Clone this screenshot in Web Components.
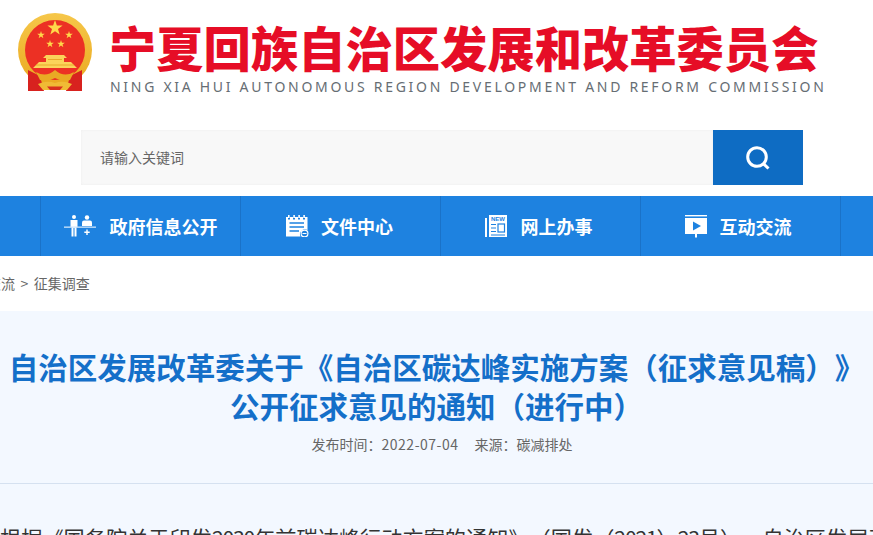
<!DOCTYPE html>
<html lang="zh-CN">
<head>
<meta charset="utf-8">
<title>征集调查</title>
<style>
  html, body { margin: 0; padding: 0; background: #fff; overflow: hidden; }
  body {
    width: 873px;
    height: 535px;
    font-family: "Noto Sans CJK SC", "Liberation Sans", sans-serif;
    color: #333;
    text-spacing-trim: space-all;
  }
</style>
</head>
<body>
<gov-header></gov-header>
<search-bar></search-bar>
<main-nav>
  <nav-item label="政府信息公开" icon="people"></nav-item>
  <nav-item label="文件中心" icon="file"></nav-item>
  <nav-item label="网上办事" icon="news"></nav-item>
  <nav-item label="互动交流" icon="screen"></nav-item>
</main-nav>
<bread-crumb></bread-crumb>
<article-panel
  heading="自治区发展改革委关于《自治区碳达峰实施方案（征求意见稿）》|公开征求意见的通知（进行中）"
  date="2022-07-04"
  source="碳减排处">根据《国务院关于印发<span class="n">2030</span>年前碳达峰行动方案的通知》（国发（<span class="n">2021</span>）<span class="n">23</span>号），自治区发展改</article-panel>

<script>
class GovHeader extends HTMLElement {
  constructor () {
    super()
    this.shadow = this.attachShadow({ mode: 'open' })
  }

  connectedCallback () {
    const star = (x, y, r) => {
      let pts = []
      for (let i = 0; i < 10; i++) {
        const a = -Math.PI / 2 + i * Math.PI / 5
        const rr = i % 2 ? r * 0.4 : r
        pts.push((x + rr * Math.cos(a)).toFixed(1) + ',' + (y + rr * Math.sin(a)).toFixed(1))
      }
      return `<polygon points="${pts.join(' ')}" fill="#ffd84a"/>`
    }
    this.shadow.innerHTML = `
      <style>
        :host { display: flex; height: 130px; padding-left: 17px; box-sizing: border-box; }
        svg { width: 76px; height: 82px; margin-top: 11px; flex: none; }
        .names { margin-left: 16px; padding-top: 17px; }
        .cn {
          font-size: 47.3px;
          line-height: 60px;
          font-weight: 900;
          color: #e60d26;
          white-space: nowrap;
        }
        .en {
          margin: 1px 0 0 1px;
          font-family: "Noto Sans", "Liberation Sans", sans-serif;
          font-size: 14px;
          line-height: 18px;
          letter-spacing: 2.71px;
          color: #666d73;
          white-space: nowrap;
        }
      </style>
      <svg viewBox="17 11 76 82">
        <defs>
          <linearGradient id="gold" x1="0" y1="0" x2="0" y2="1">
            <stop offset="0" stop-color="#f6c74a"/>
            <stop offset="1" stop-color="#eaa91f"/>
          </linearGradient>
        </defs>
        <circle cx="55" cy="50" r="37" fill="url(#gold)"/>
        <circle cx="55" cy="50" r="30" fill="#ec3024"/>
        ${star(55, 28, 8)}
        ${star(41, 35, 4)}
        ${star(69, 35, 4)}
        ${star(50, 44, 4)}
        ${star(61, 44, 4)}
        <path d="M43 58 L46 55 H64 L67 58 H64 V62 H71 L77 68 H33 L39 62 H46 V58 Z" fill="#fbd35a"/>
        <path d="M36 65 H74 M48 59.5 H62" stroke="#e5a11f" stroke-width=".8"/>
        <path d="M28 70 L40 76 L44 91 L28 91 Z M82 70 L70 76 L66 91 L82 91 Z" fill="#d8221f"/>
        <path d="M36 72 Q46 78 55 70 Q64 78 74 72 L70 80 Q62 82 55 78 Q48 82 40 80 Z" fill="#e9aa24"/>
        <path d="M38 84 Q47 80 55 83 Q63 80 72 84 L67 90 H43 Z" fill="#f0bb35"/>
        <path d="M47 86.5 H63 L60 90 H50 Z" fill="#d8301f"/>
      </svg>
      <div class="names">
        <div class="cn">宁夏回族自治区发展和改革委员会</div>
        <div class="en">NING XIA HUI AUTONOMOUS REGION DEVELOPMENT AND REFORM COMMISSION</div>
      </div>
    `
  }
}

class SearchBar extends HTMLElement {
  constructor () {
    super()
    this.shadow = this.attachShadow({ mode: 'open' })
  }

  connectedCallback () {
    this.shadow.innerHTML = `
      <style>
        :host { display: flex; height: 55px; margin: 0 70px 11px 81px; }
        .input {
          flex: 1;
          display: flex;
          align-items: center;
          padding: 0 0 2px 19px;
          background: #f8f8f8;
          box-shadow: inset 0 0 3px #eee;
          font-size: 14px;
          color: #666;
        }
        .btn {
          width: 90px;
          display: flex;
          align-items: center;
          justify-content: center;
          background: #0e6cc3;
        }
        svg { width: 26px; height: 26px; }
      </style>
      <div class="input">请输入关键词</div>
      <div class="btn">
        <svg viewBox="0 0 26 26" fill="none" stroke="#fff">
          <circle cx="12" cy="12" r="9.3" stroke-width="3"/>
          <path d="M18.6 18.8 L23.5 23.5" stroke-width="3"/>
        </svg>
      </div>
    `
  }
}

class MainNav extends HTMLElement {
  constructor () {
    super()
    this.shadow = this.attachShadow({ mode: 'open' })
    this.shadow.innerHTML = `
      <style>
        :host {
          display: flex;
          height: 60px;
          padding-left: 40px;
          background: #1e82e0;
          overflow: hidden;
        }
        .end { width: 0; border-left: 1px solid #1a72c8; }
      </style>
      <slot></slot>
      <div class="end"></div>
    `
  }
}

const NAV_ICONS = {
  people: `
    <svg viewBox="0 0 32 22" width="32" height="22" fill="#fff" style="margin:0 1px 0 3px">
      <circle cx="10" cy="2" r="2"/>
      <path d="M6.5 5 H13.5 V12 H12.5 V21.5 H10.5 V13 H9.5 V21.5 H7.5 V12 H6.5 Z"/>
      <circle cx="23" cy="2.5" r="2.2"/>
      <path d="M18 11 V7.5 Q18 5.5 20 5.5 H26 Q28 5.5 28 7.5 V11 Z"/>
      <rect x="0" y="11.5" width="32" height="1.3" fill="#cfe5fb"/>
      <path d="M22.3 14.5 H23.7 V16.5 H25.7 V17.9 H23.7 V20 H22.3 V17.9 H20.3 V16.5 H22.3 Z"/>
    </svg>`,
  file: `
    <svg viewBox="0 0 23 22" width="23" height="22" style="margin:0 -1px 0 1px">
      <path fill="#fff" d="M0 2 H2 V4.5 H4 V2 H7 V4.5 H9 V2 H12 V4.5 H14 V2 H17 V4.5 H19 V2 H21.5 V15 A5 5 0 0 0 14.5 21.5 H0 Z"/>
      <rect x="2" y="0" width="1.6" height="3" fill="#fff"/>
      <rect x="7.3" y="0" width="1.6" height="3" fill="#fff"/>
      <rect x="12.3" y="0" width="1.6" height="3" fill="#fff"/>
      <rect x="17.3" y="0" width="1.6" height="3" fill="#fff"/>
      <path stroke="#1e82e0" stroke-width="1.6" d="M3.5 8 H18 M3.5 12 H18 M3.5 16 H13"/>
      <circle cx="18.5" cy="18.5" r="3.4" fill="none" stroke="#fff" stroke-width="1.2"/>
      <path stroke="#fff" stroke-width="1" d="M16.5 18.5 H20.5"/>
    </svg>`,
  news: `
    <svg viewBox="0 0 22 22" width="22" height="22" style="margin:0 1px 0 -1px">
      <rect x="0" y="3" width="2" height="19" fill="#fff"/>
      <rect x="4" y="0" width="18" height="22" fill="#fff"/>
      <text x="13" y="6.4" text-anchor="middle" font-family="Liberation Sans, sans-serif" font-size="6" font-weight="700" fill="#1e82e0">NEW</text>
      <path stroke="#1e82e0" stroke-width="1.2" d="M6 9.5 H11 M6 13 H11 M6 16.5 H11 M6 20 H20"/>
      <rect x="13" y="9" width="6.5" height="8" fill="none" stroke="#1e82e0" stroke-width="1.2"/>
    </svg>`,
  screen: `
    <svg viewBox="0 0 22 23" width="22" height="23" style="margin-left:-2px">
      <rect x="0" y="0" width="22" height="1.4" fill="#fff"/>
      <rect x="0" y="3" width="22" height="16" fill="#fff"/>
      <path d="M8 6.5 L16 11 L8 15.5 Z" fill="#1e82e0"/>
      <rect x="10" y="19" width="2" height="3.5" fill="#fff"/>
    </svg>`
}

class NavItem extends HTMLElement {
  constructor () {
    super()
    this.shadow = this.attachShadow({ mode: 'open' })
  }

  connectedCallback () {
    const label = this.getAttribute('label')
    const icon = NAV_ICONS[this.getAttribute('icon')]
    this.shadow.innerHTML = `
      <style>
        :host {
          flex: none;
          box-sizing: border-box;
          width: 200px;
          padding-right: 3px;
          display: flex;
          align-items: center;
          justify-content: center;
          gap: 13px;
          border-left: 1px solid #1a72c8;
        }
        svg { flex: none; display: block; }
        span {
          font-size: 18px;
          font-weight: 700;
          line-height: 60px;
          color: #fff;
          white-space: nowrap;
        }
      </style>
      ${icon}
      <span>${label}</span>
    `
  }
}

class BreadCrumb extends HTMLElement {
  constructor () {
    super()
    this.shadow = this.attachShadow({ mode: 'open' })
  }

  connectedCallback () {
    this.shadow.innerHTML = `
      <style>
        :host {
          display: block;
          height: 55px;
          overflow: hidden;
          font-size: 14px;
          line-height: 54px;
          color: #666;
          white-space: nowrap;
        }
        div { margin-left: -41px; }
        i { font-style: normal; margin: 0 5.5px; }
      </style>
      <div>互动交流<i>&gt;</i>征集调查</div>
    `
  }
}

class ArticlePanel extends HTMLElement {
  constructor () {
    super()
    this.shadow = this.attachShadow({ mode: 'open' })
  }

  connectedCallback () {
    const lines = this.getAttribute('heading').split('|').map(l => `<div>${l}</div>`).join('')
    this.shadow.innerHTML = `
      <style>
        :host {
          display: block;
          height: 224px;
          overflow: hidden;
          background: #f3f8ff;
        }
        .head {
          height: 173px;
          box-sizing: border-box;
          padding-top: 36px;
          border-bottom: 1px solid #d5e1f0;
          display: flex;
          flex-direction: column;
          align-items: center;
        }
        h1 {
          margin: 0;
          font-size: 29.5px;
          line-height: 39px;
          font-weight: 700;
          color: #146fc9;
          text-align: center;
          white-space: nowrap;
        }
        .meta {
          display: flex;
          gap: 16px;
          margin-top: 8px;
          margin-left: 11px;
          font-size: 14px;
          line-height: 22px;
          color: #666;
        }
        .date { letter-spacing: .5px; }
        .body {
          margin-top: 36px;
          font-size: 21.2px;
          line-height: 36px;
          color: #333;
          white-space: nowrap;
        }
        ::slotted(.n) { letter-spacing: -1.2px; }
      </style>
      <div class="head">
        <h1>${lines}</h1>
        <div class="meta">
          <span>发布时间：<span class="date">${this.getAttribute('date')}</span></span>
          <span>来源：${this.getAttribute('source')}</span>
        </div>
      </div>
      <div class="body"><slot></slot></div>
    `
  }
}

customElements.define('gov-header', GovHeader)
customElements.define('search-bar', SearchBar)
customElements.define('main-nav', MainNav)
customElements.define('nav-item', NavItem)
customElements.define('bread-crumb', BreadCrumb)
customElements.define('article-panel', ArticlePanel)
</script>
</body>
</html>
